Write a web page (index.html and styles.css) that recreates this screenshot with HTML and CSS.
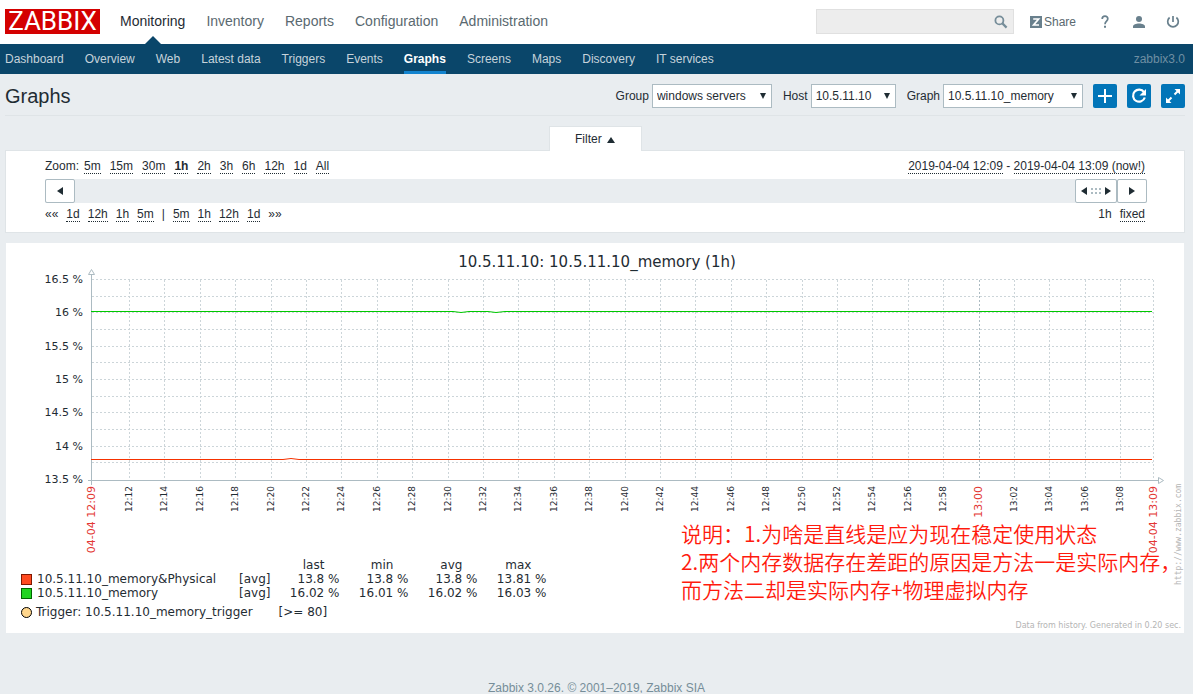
FILE: index.html
```html
<!DOCTYPE html>
<html lang="en">
<head>
<meta charset="utf-8">
<title>Graphs</title>
<link rel="stylesheet" href="styles.css">
</head>
<body>
<header class="top">
  <a class="logo" href="#">ZABBIX</a>
  <nav class="main-nav">
    <a class="selected" href="#">Monitoring</a>
    <a href="#">Inventory</a>
    <a href="#">Reports</a>
    <a href="#">Configuration</a>
    <a href="#">Administration</a>
  </nav>
  <form class="search">
    <input type="text" aria-label="Search">
    <button type="button" aria-label="Search"><svg width="14" height="14" viewBox="0 0 14 14"><circle cx="5.4" cy="5.4" r="4" fill="none" stroke="#768d99" stroke-width="1.8"/><path d="M8.4 8.4L12.6 12.6" stroke="#768d99" stroke-width="2.2"/></svg></button>
  </form>
  <a class="share" href="#"><svg width="12" height="12" viewBox="0 0 12 12"><path fill="#69808d" d="M0 0h12v12H0z"/><path d="M3.2 3h5.4L3.6 9H9" fill="none" stroke="#fff" stroke-width="1.7"/></svg>Share</a>
  <a class="help" href="#" aria-label="Help"><svg width="8" height="14" viewBox="0 0 8 14"><path d="M1.2 4C1.2 2.2 2.3 1.2 4 1.2S6.8 2.2 6.8 3.8C6.8 6 4 6.2 4 9.2" fill="none" stroke="#69808d" stroke-width="1.7"/><path fill="#69808d" d="M3 10.8h2v2H3z"/></svg></a>
  <a class="user" href="#" aria-label="Profile"><svg width="12" height="12" viewBox="0 0 12 12"><circle cx="6" cy="3" r="3" fill="#69808d"/><path d="M0 12v-1.5C0 8.6 3 7.6 6 7.6s6 1 6 2.9V12z" fill="#69808d"/></svg></a>
  <a class="power" href="#" aria-label="Sign out"><svg width="14" height="14" viewBox="0 0 14 14"><path d="M3.6 2.5A5.3 5.3 0 1 0 10.4 2.500M7 1v6" fill="none" stroke="#69808d" stroke-width="1.7"/></svg></a>
</header>
<nav class="sub-nav">
  <a href="#">Dashboard</a>
  <a href="#">Overview</a>
  <a href="#">Web</a>
  <a href="#">Latest data</a>
  <a href="#">Triggers</a>
  <a href="#">Events</a>
  <a class="selected" href="#">Graphs</a>
  <a href="#">Screens</a>
  <a href="#">Maps</a>
  <a href="#">Discovery</a>
  <a href="#">IT services</a>
  <span class="server">zabbix3.0</span>
</nav>
<main>
  <div class="title-bar">
    <h1>Graphs</h1>
    <label for="group">Group</label>
    <span class="pick pick-group"><select id="group"><option>windows servers</option></select></span>
    <label for="host">Host</label>
    <span class="pick pick-host"><select id="host"><option>10.5.11.10</option></select></span>
    <label for="graph">Graph</label>
    <span class="pick pick-graph"><select id="graph"><option>10.5.11.10_memory</option></select></span>
    <button class="action" type="button" aria-label="Add to favourites"><svg width="24" height="24" viewBox="0 0 24 24"><path d="M12 5v14M5 12h14" stroke="#fff" stroke-width="2"/></svg></button>
    <button class="action" type="button" aria-label="Reset"><svg width="24" height="24" viewBox="0 0 24 24"><path d="M17 8.2A6 6 0 1 0 17.8 13.5" fill="none" stroke="#fff" stroke-width="2.2"/><path d="M19 5v6.500h-6.500z" fill="#fff"/></svg></button>
    <button class="action" type="button" aria-label="Fullscreen"><svg width="24" height="24" viewBox="0 0 24 24"><path d="M13.500 5H19v5.500zM5 13.500V19h5.500z" fill="#fff"/><path d="M13.500 10.500L17 7M10.500 13.500L7 17" stroke="#fff" stroke-width="2"/></svg></button>
  </div>
  <div class="tab-row"><button class="filter-tab" type="button">Filter <span class="tri up"></span></button></div>
  <section class="filter">
    <div class="row">
      <div class="links zoom"><span>Zoom:</span><a href="#">5m</a><a href="#">15m</a><a href="#">30m</a><a class="current" href="#">1h</a><a href="#">2h</a><a href="#">3h</a><a href="#">6h</a><a href="#">12h</a><a href="#">1d</a><a href="#">All</a></div>
      <div class="period"><a href="#">2019-04-04 12:09</a> - <a href="#">2019-04-04 13:09 (now!)</a></div>
    </div>
    <div class="scroll">
      <button type="button" aria-label="Back"><span class="tri left"></span></button>
      <button class="handle" type="button" aria-label="Drag"><span class="tri left"></span><span class="dots"></span><span class="tri right"></span></button>
      <button type="button" aria-label="Forward"><span class="tri right"></span></button>
    </div>
    <div class="row">
      <div class="links"><span>««</span><a href="#">1d</a><a href="#">12h</a><a href="#">1h</a><a href="#">5m</a><span>|</span><a href="#">5m</a><a href="#">1h</a><a href="#">12h</a><a href="#">1d</a><span>»»</span></div>
      <div class="links mode"><span>1h</span><a href="#">fixed</a></div>
    </div>
  </section>
  <section class="chart">
    <svg class="plot" viewBox="0 0 1178 315" role="img" aria-label="Memory graph">
      <text class="plot-title" x="591" y="24">10.5.11.10: 10.5.11.10_memory (1h)</text>
      <g id="grid"></g>
      <path class="axis" d="M85.500 32V242M82 237.500H1152M82.500 31.500L85.500 26.500L88.500 31.500zM1152.500 234.500V240.500L1157.500 237.500z"/>
      <path class="series green" d="M85 68.500H447L455 69.500L463 68.500H482L490 69.500L499 68.500H1146"/>
      <path class="series red" d="M85 216.500H277L285 215.500L293 216.500H1146"/>
      <g id="labels"></g>
      <text class="url" transform="translate(1175 342) rotate(-90)">http://www.zabbix.com</text>
    </svg>
    <table class="legend">
      <thead><tr><td class="key"></td><td class="name"></td><td class="func"></td><th>last</th><th>min</th><th>avg</th><th>max</th></tr></thead>
      <tbody>
        <tr><td class="key"><span class="swatch physical"></span></td><td class="name">10.5.11.10_memory&amp;Physical</td><td class="func">[avg]</td><td>13.8 %</td><td>13.8 %</td><td>13.8 %</td><td>13.81 %</td></tr>
        <tr><td class="key"><span class="swatch memory"></span></td><td class="name">10.5.11.10_memory</td><td class="func">[avg]</td><td>16.02 %</td><td>16.01 %</td><td>16.02 %</td><td>16.03 %</td></tr>
      </tbody>
    </table>
    <div class="trigger"><span class="dot"></span><span>Trigger: 10.5.11.10_memory_trigger</span><span class="limit">[&gt;= 80]</span></div>
    <div class="generated">Data from history. Generated in 0.20 sec.</div>
    <p class="note" lang="zh">说明：1.为啥是直线是应为现在稳定使用状态<br>2.两个内存数据存在差距的原因是方法一是实际内存，<br>而方法二却是实际内存+物理虚拟内存</p>
  </section>
</main>
<footer>Zabbix 3.0.26. © 2001–2019, Zabbix SIA</footer>
<script src="graph.js"></script>
</body>
</html>
```
FILE: styles.css
```css
* { box-sizing: border-box; }
body {
  margin: 0;
  background: #e9edf0;
  color: #1f2c33;
  font: 12px/16px "Liberation Sans", Arial, sans-serif;
}
a { color: inherit; text-decoration: none; }
button, input, select { font: inherit; color: inherit; margin: 0; padding: 0; }
svg { display: block; }

.top {
  display: flex;
  align-items: center;
  height: 44px;
  padding: 0 13px 1px 5px;
  background: #fff;
}
.logo {
  width: 95px;
  height: 25px;
  background: #d40000;
  color: #fff;
  font: 26px/25px Roboto, sans-serif;
  text-align: center;
}
.main-nav {
  display: flex;
  gap: 21px;
  height: 44px;
  margin-left: 20px;
  font-size: 14px;
  line-height: 43px;
  color: #5a6970;
}
.main-nav .selected { position: relative; color: #1f2c33; }
.main-nav .selected::after {
  content: "";
  position: absolute;
  left: 50%;
  bottom: 0;
  margin-left: -8px;
  border: 8px solid transparent;
  border-top: 0;
  border-bottom-color: #0a466a;
}
.search { display: flex; margin-left: auto; width: 198px; height: 25px; background: #ededed; border: 1px solid #e0e0e0; }
.search input { flex: 1; min-width: 0; border: 0; background: none; }
.search button { width: 24px; border: 0; background: none; display: grid; place-items: center; }
.share { display: flex; align-items: center; gap: 2px; margin-left: 16px; color: #5a6970; }
.help { margin-left: 25px; }
.user { margin-left: 24px; }
.power { margin-left: 21px; }

.sub-nav {
  display: flex;
  gap: 21px;
  height: 30px;
  padding: 0 8px 0 5px;
  background: #0a466a;
  color: #c6d3db;
  line-height: 30px;
}
.sub-nav .selected { color: #fff; font-weight: bold; box-shadow: inset 0 -3px #1384cf; }
.server { margin-left: auto; color: #6f8fa3; }

main { padding: 0 8px 0 5px; }
.title-bar {
  display: flex;
  align-items: center;
  height: 42px;
  padding-top: 2px;
  border-bottom: 1px solid #dfe4e7;
}
h1 { margin: 0 auto 0 0; font-size: 20px; line-height: 24px; font-weight: normal; }
.title-bar label { margin-right: 3px; }
.pick { position: relative; height: 24px; margin-right: 11px; }
.pick-group { width: 120px; }
.pick-host { width: 85px; }
.pick-graph { width: 140px; margin-right: 10px; }
.pick select {
  appearance: none;
  width: 100%;
  height: 24px;
  padding: 0 4px;
  border: 1px solid #acbbc2;
  border-radius: 0;
  background: #fff;
}
.pick::after {
  content: "";
  position: absolute;
  right: 6px;
  top: 9px;
  border: 3px solid transparent;
  border-top: 6px solid #1f2c33;
  border-bottom: 0;
  pointer-events: none;
}
.action { width: 24px; height: 24px; border: 0; border-radius: 2px; background: #0275b8; }
.action + .action { margin-left: 10px; }

.tab-row { display: flex; justify-content: center; padding-top: 10px; }
.filter-tab {
  width: 93px;
  height: 25px;
  margin-bottom: -1px;
  z-index: 1;
  border: 1px solid #dfe4e7;
  border-bottom: 0;
  background: #fff;
}
.tri { display: inline-block; border: 4px solid transparent; }
.tri.up { margin-left: 2px; border-top: 0; border-bottom: 6px solid #1f2c33; }
.tri.left { border-left: 0; border-right: 6px solid #1f2c33; }
.tri.right { border-right: 0; border-left: 6px solid #1f2c33; }

.filter { padding: 8px 37px 10px 39px; border: 1px solid #dfe4e7; background: #fff; }
.row { display: flex; justify-content: space-between; line-height: 14px; }
.row a { border-bottom: 1px dotted #1f2c33; }
.links { display: flex; gap: 8px; }
.zoom { gap: 9px; }
.zoom span { margin-right: -4px; }
.current { font-weight: bold; }
.row > :last-child { margin-right: 2px; }
.scroll { display: flex; height: 24px; margin: 5px 0 4px; background: #e9edf0; }
.scroll button {
  display: flex;
  align-items: center;
  justify-content: center;
  gap: 4px;
  width: 30px;
  border: 1px solid #acbbc2;
  border-radius: 2px;
  background: #fff;
}
.scroll .handle { width: 42px; margin-left: auto; }
.dots {
  width: 10px;
  height: 6px;
  background: repeating-linear-gradient(90deg, transparent 0 2px, #fff 2px 4px), linear-gradient(#acbbc2 2px, #fff 2px 4px, #acbbc2 4px);
}

.chart {
  position: relative;
  margin: 10px 1px 0;
  padding-bottom: 2px;
  background: #fff;
  font: 12px/14px "DejaVu Sans", sans-serif;
}
.plot { width: 100%; overflow: visible; }
.plot text { font-family: "DejaVu Sans", sans-serif; fill: #1f2c33; }
.plot .plot-title { font-size: 15px; text-anchor: middle; }
.plot .value { font-size: 11px; text-anchor: end; }
.plot .time { font-size: 9px; text-anchor: end; }
.plot .major { font-size: 11px; text-anchor: end; fill: #e33734; }
.plot .url { font: 8px "DejaVu Sans Mono", monospace; fill: #b4b4b4; }
.grid-line { stroke: #ccd5d9; stroke-dasharray: 2 2; }
.grid-line.hour { stroke: #acbbc2; }
.axis { fill: none; stroke: #acbbc2; }
.series { fill: none; }
.green { stroke: #00c800; }
.red { stroke: #f63100; }

.legend { margin-left: 15px; border-collapse: collapse; }
.legend th, .legend td { padding: 0; width: 69px; height: 14px; text-align: right; font-weight: normal; white-space: nowrap; }
.legend th { padding-right: 15px; }
.legend .key { width: 16px; }
.legend .name { width: 202px; text-align: left; }
.legend .func { width: 28px; text-align: left; }
.swatch { display: block; width: 11px; height: 11px; border: 1px solid; }
.physical { background: #ff4a20; border-color: #801800; }
.memory { background: #20d420; border-color: #006600; }
.trigger { display: flex; align-items: center; gap: 4px; margin: 5px 0 0 15px; }
.dot { width: 11px; height: 11px; border: 1px solid #000; border-radius: 50%; background: #ffd68c; }
.limit { margin-left: 22px; }
.generated { margin-top: 2px; padding-right: 3px; font-size: 8px; line-height: 10px; text-align: right; color: #b4b4b4; }
.note {
  position: absolute;
  right: 0;
  top: 276px;
  width: 503px;
  margin: 0;
  color: #ff1a0d;
  font: 350 21px/28px "Noto Sans CJK SC", sans-serif;
  white-space: nowrap;
}
footer { margin-top: 50px; text-align: center; line-height: 10px; color: #768d99; }
```
FILE: graph.js
```js
const NS = "http://www.w3.org/2000/svg";
const grid = document.getElementById("grid");
const labels = document.getElementById("labels");

function line(x1, y1, x2, y2, cls) {
  const el = document.createElementNS(NS, "path");
  el.setAttribute("d", `M${x1} ${y1}L${x2} ${y2}`);
  el.setAttribute("class", cls);
  grid.appendChild(el);
}

function label(text, x, y, cls, vertical) {
  const el = document.createElementNS(NS, "text");
  el.textContent = text;
  el.setAttribute("class", cls);
  el.setAttribute("transform", `translate(${x} ${y})` + (vertical ? " rotate(-90)" : ""));
  labels.appendChild(el);
}

for (let i = 0; i < 12; i++) {
  const y = Math.round(36 + i * 16.67) + 0.5;
  line(86, y, 1147, y, "grid-line");
}
for (let i = 0; i <= 6; i++) {
  label(`${16.5 - i * 0.5} %`, 77, Math.round(40 + i * 33.33), "value", false);
}
for (let i = 0; i < 29; i++) {
  const minutes = 12 + i * 2;
  const x = Math.round(123 + i * 35.4);
  const hour = minutes === 60;
  const text = `${minutes < 60 ? 12 : 13}:${String(minutes % 60).padStart(2, "0")}`;
  line(x + 0.5, 37, x + 0.5, 237, hour ? "grid-line hour" : "grid-line");
  label(text, x + 3, 243, hour ? "major" : "time", true);
}
line(1147.5, 37, 1147.5, 237, "grid-line");
label("04-04 12:09", 89, 243, "major", true);
label("04-04 13:09", 1151, 243, "major", true);
```
